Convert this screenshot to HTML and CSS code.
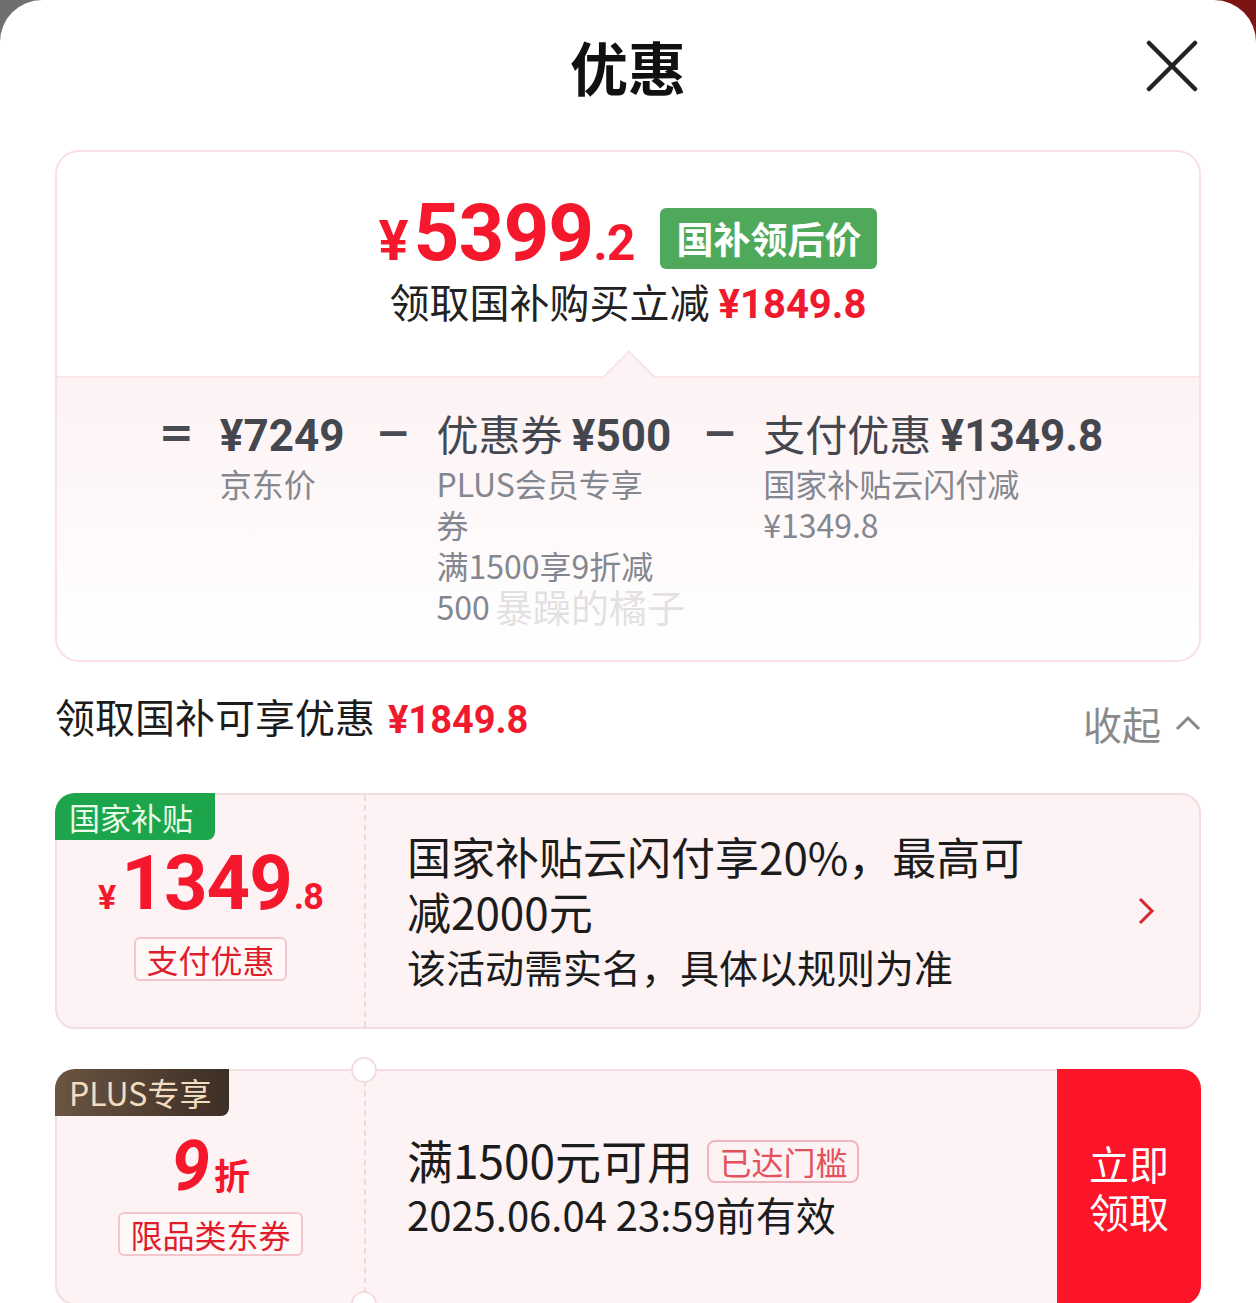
FILE: index.html
```html
<!DOCTYPE html>
<html lang="zh-CN">
<head>
    <meta charset="UTF-8">
    <meta name="viewport" content="width=device-width, initial-scale=1.0">
    <title>优惠</title>
    <link rel="stylesheet" href="styles.css">
</head>
<body>
<div class="sheet">
    <div class="header">
        <span></span>
        <h1 class="title">优惠</h1>
        <button class="close" aria-label="关闭">
            <svg width="52" height="52" viewBox="0 0 52 52"><path d="M3 3 L49 49 M49 3 L3 49" stroke="#222" stroke-width="4.5" stroke-linecap="round" fill="none"/></svg>
        </button>
    </div>

    <!-- summary -->
    <div class="summary">
        <div class="summary-top">
            <div class="final-price">
                <span class="price-big"><span class="yen">¥</span>5399<span class="dec">.2</span></span>
                <span class="green-tag">国补领后价</span>
            </div>
            <div class="save-line">领取国补购买立减 <b class="red">¥1849.8</b></div>
            <span class="notch"></span>
        </div>
        <div class="summary-bottom">
            <span class="op">=</span>
            <div class="col">
                <div class="col-head"><b class="num">¥7249</b></div>
                <div class="col-sub">京东价</div>
            </div>
            <span class="op">−</span>
            <div class="col">
                <div class="col-head">优惠券 <b class="num">¥500</b></div>
                <div class="col-sub">PLUS会员专享<br>券<br>满1500享9折减<br>500</div>
            </div>
            <span class="op">−</span>
            <div class="col">
                <div class="col-head">支付优惠 <b class="num">¥1349.8</b></div>
                <div class="col-sub">国家补贴云闪付减<br>¥1349.8</div>
            </div>
            <span class="watermark">暴躁的橘子</span>
        </div>
    </div>

    <div class="section-head">
        <div class="section-title">领取国补可享优惠 <b class="red">¥1849.8</b></div>
        <div class="fold">收起
            <svg width="26" height="16" viewBox="0 0 26 16"><path d="M2 14 L13 3 L24 14" stroke="#888" stroke-width="3" fill="none"/></svg>
        </div>
    </div>

    <!-- coupon 1 -->
    <div class="coupon">
        <span class="badge badge-green">国家补贴</span>
        <div class="coupon-left">
            <div class="amount"><span class="amt-yen">¥</span>1349<span class="amt-dec">.8</span></div>
            <span class="outline-tag">支付优惠</span>
        </div>
        <div class="coupon-right">
            <div class="coupon-title">国家补贴云闪付享20%，最高可减2000元</div>
            <div class="coupon-desc">该活动需实名，具体以规则为准</div>
        </div>
        <svg class="chevron" width="18" height="30" viewBox="0 0 18 30"><path d="M3 3 L15 15 L3 27" stroke="#d8262e" stroke-width="3" fill="none"/></svg>
    </div>

    <!-- coupon 2 -->
    <div class="coupon coupon-plus">
        <span class="badge badge-plus">PLUS专享</span>
        <div class="coupon-left cut">
            <div class="discount"><span class="disc-num">9</span><span class="disc-unit">折</span></div>
            <span class="outline-tag">限品类东券</span>
        </div>
        <div class="coupon-right">
            <div class="coupon-title">满1500元可用 <span class="reach-tag">已达门槛</span></div>
            <div class="coupon-date">2025.06.04 23:59前有效</div>
        </div>
        <button class="get-btn">立即<br>领取</button>
    </div>
</div>
</body>
</html>
```

FILE: styles.css
```css
html {
    overflow: hidden;
    background: linear-gradient(to right, #6f6f6f 50%, #7c1414 50%);
}
body {
    margin: 0;
    font-family: "Noto Sans CJK SC", sans-serif;
    color: #1c1c1c;
}
.sheet {
    background: #fff;
    border-radius: 42px 42px 0 0;
    padding: 0 55px;
    min-height: 1400px;
}
.red {
    color: #f0192d;
    font-family: Roboto, "Noto Sans CJK SC", sans-serif;
    font-weight: 700;
}
.num {
    font-family: Roboto, "Noto Sans CJK SC", sans-serif;
    font-weight: 700;
    font-size: 44px;
}

/* header */
.header {
    height: 132px;
    display: grid;
    grid-template-columns: 1fr auto 1fr;
    align-items: center;
}
.title {
    margin: 0;
    font-size: 58px;
    font-weight: 700;
    color: #111;
    line-height: 1;
}
.close {
    justify-self: end;
    margin-right: 3px;
    padding: 0;
    border: 0;
    background: none;
    display: flex;
}

/* summary card */
.summary {
    position: relative;
    margin-top: 18px;
    border: 2px solid #f8e0e5;
    border-radius: 24px;
    overflow: hidden;
}
.summary-top {
    position: relative;
    height: 176px;
    padding-top: 48px;
    display: flex;
    flex-direction: column;
    align-items: center;
    border-bottom: 2px solid #fbe7ea;
}
.final-price {
    display: flex;
    align-items: center;
    height: 76px;
}
.price-big {
    font-family: Roboto, sans-serif;
    font-weight: 700;
    font-size: 80px;
    line-height: 76px;
    color: #f5182c;
    letter-spacing: -1px;
}
.price-big .yen {
    font-size: 56px;
    margin-right: 6px;
}
.price-big .dec {
    font-size: 50px;
}
.green-tag {
    margin-left: 26px;
    background: #4fa95a;
    color: #fff;
    font-size: 37px;
    font-weight: 700;
    line-height: 61px;
    padding: 0 16px;
    border-radius: 6px;
}
.save-line {
    font-size: 40px;
    line-height: 50px;
    color: #222;
}
.notch {
    position: absolute;
    left: 50%;
    bottom: -20px;
    width: 36px;
    height: 36px;
    margin-left: -18px;
    background: #fdf3f5;
    border-top: 2px solid #fbe4e8;
    border-left: 2px solid #fbe4e8;
    transform: rotate(45deg);
}
.summary-bottom {
    position: relative;
    height: 254px;
    padding-top: 28px;
    display: flex;
    justify-content: center;
    align-items: flex-start;
    gap: 31px;
    background: linear-gradient(#fdf2f4, #fff);
    color: #45474f;
    padding-left: 6px;
}
.op {
    font-family: "DejaVu Sans", sans-serif;
    font-weight: 700;
    font-size: 42px;
    line-height: 54px;
    color: #4a4c54;
    width: 30px;
    text-align: center;
}
.col-head {
    font-size: 42px;
    line-height: 54px;
    white-space: nowrap;
}
.col-sub {
    font-size: 32px;
    line-height: 41px;
    color: #84878f;
}
.watermark {
    position: absolute;
    left: 438px;
    top: 200px;
    font-size: 38px;
    color: rgba(190, 190, 190, 0.45);
}

/* section head */
.section-head {
    margin-top: 26px;
    display: flex;
    justify-content: space-between;
    align-items: center;
    height: 56px;
}
.section-title {
    font-size: 40px;
    color: #1c1c1c;
}
.section-title .red {
    margin-left: 4px;
    font-size: 38px;
}
.fold {
    font-size: 39px;
    color: #8a8a8a;
    display: flex;
    align-items: center;
    gap: 14px;
    margin-top: 14px;
}

/* coupons */
.coupon {
    position: relative;
    margin-top: 49px;
    height: 232px;
    display: flex;
    align-items: center;
    background: #fdf3f4;
    border: 2px solid #f4dde1;
    border-radius: 20px;
}
.coupon-plus {
    margin-top: 40px;
}
.badge {
    position: absolute;
    top: -2px;
    left: -2px;
    height: 47px;
    line-height: 47px;
    padding: 0 14px;
    font-size: 31px;
    border-radius: 20px 0 8px 0;
}
.badge-green {
    background: #1ca54b;
    color: #eafbe8;
    width: 132px;
}
.badge-plus {
    background: linear-gradient(to right, #6a5442, #3c2f25);
    color: #f3dcc0;
    font-size: 32px;
    width: 146px;
}
.coupon-left {
    position: relative;
    width: 309px;
    height: 100%;
    display: flex;
    flex-direction: column;
    align-items: center;
    justify-content: center;
    border-right: 2px dashed #f0d9dd;
    padding-top: 4px;
    box-sizing: border-box;
}
.cut {
    padding-top: 16px;
}
.cut::before,
.cut::after {
    content: "";
    position: absolute;
    right: -13px;
    width: 22px;
    height: 22px;
    background: #fff;
    border: 2px solid #f4dde1;
    border-radius: 50%;
}
.cut::before {
    top: -14px;
}
.cut::after {
    bottom: -14px;
}
.amount {
    font-family: Roboto, sans-serif;
    font-weight: 700;
    font-size: 76px;
    line-height: 76px;
    color: #f5182c;
    letter-spacing: -1px;
}
.amt-yen {
    font-size: 34px;
    margin-right: 6px;
}
.amt-dec {
    font-size: 36px;
    margin-left: 2px;
}
.outline-tag {
    margin-top: 2px;
    font-size: 32px;
    line-height: 40px;
    color: #e01d2d;
    padding: 0 10px;
    border: 2px solid #f2c6cc;
    border-radius: 6px;
    background: #fff8f8;
}
.discount {
    color: #f5182c;
    font-weight: 700;
    line-height: 62px;
    margin-bottom: -4px;
}
.disc-num {
    font-family: Roboto, sans-serif;
    font-size: 70px;
    font-style: italic;
}
.disc-unit {
    font-size: 36px;
    margin-left: 4px;
}
.coupon-right {
    flex: 1;
    padding-left: 41px;
}
.coupon-title {
    font-size: 44px;
    line-height: 55px;
    max-width: 660px;
    color: #1c1c1c;
}
.coupon-plus .coupon-title {
    font-size: 46px;
}
.coupon-desc {
    font-size: 39px;
    line-height: 55px;
    color: #1c1c1c;
}
.coupon-date {
    font-size: 40px;
    line-height: 55px;
    color: #1c1c1c;
}
.reach-tag {
    display: inline-block;
    vertical-align: 4px;
    margin-left: 4px;
    font-size: 32px;
    line-height: 39px;
    padding: 0 10px;
    color: #e4505c;
    border: 2px solid #eeb5bd;
    border-radius: 8px;
}
.chevron {
    margin-right: 44px;
}
.get-btn {
    align-self: stretch;
    width: 144px;
    margin: -2px -2px -2px 0;
    border: 0;
    border-radius: 0 20px 20px 0;
    background: #fc1428;
    color: #fff;
    font-family: "Noto Sans CJK SC", sans-serif;
    font-size: 40px;
    line-height: 48px;
    padding: 0;
}
```
